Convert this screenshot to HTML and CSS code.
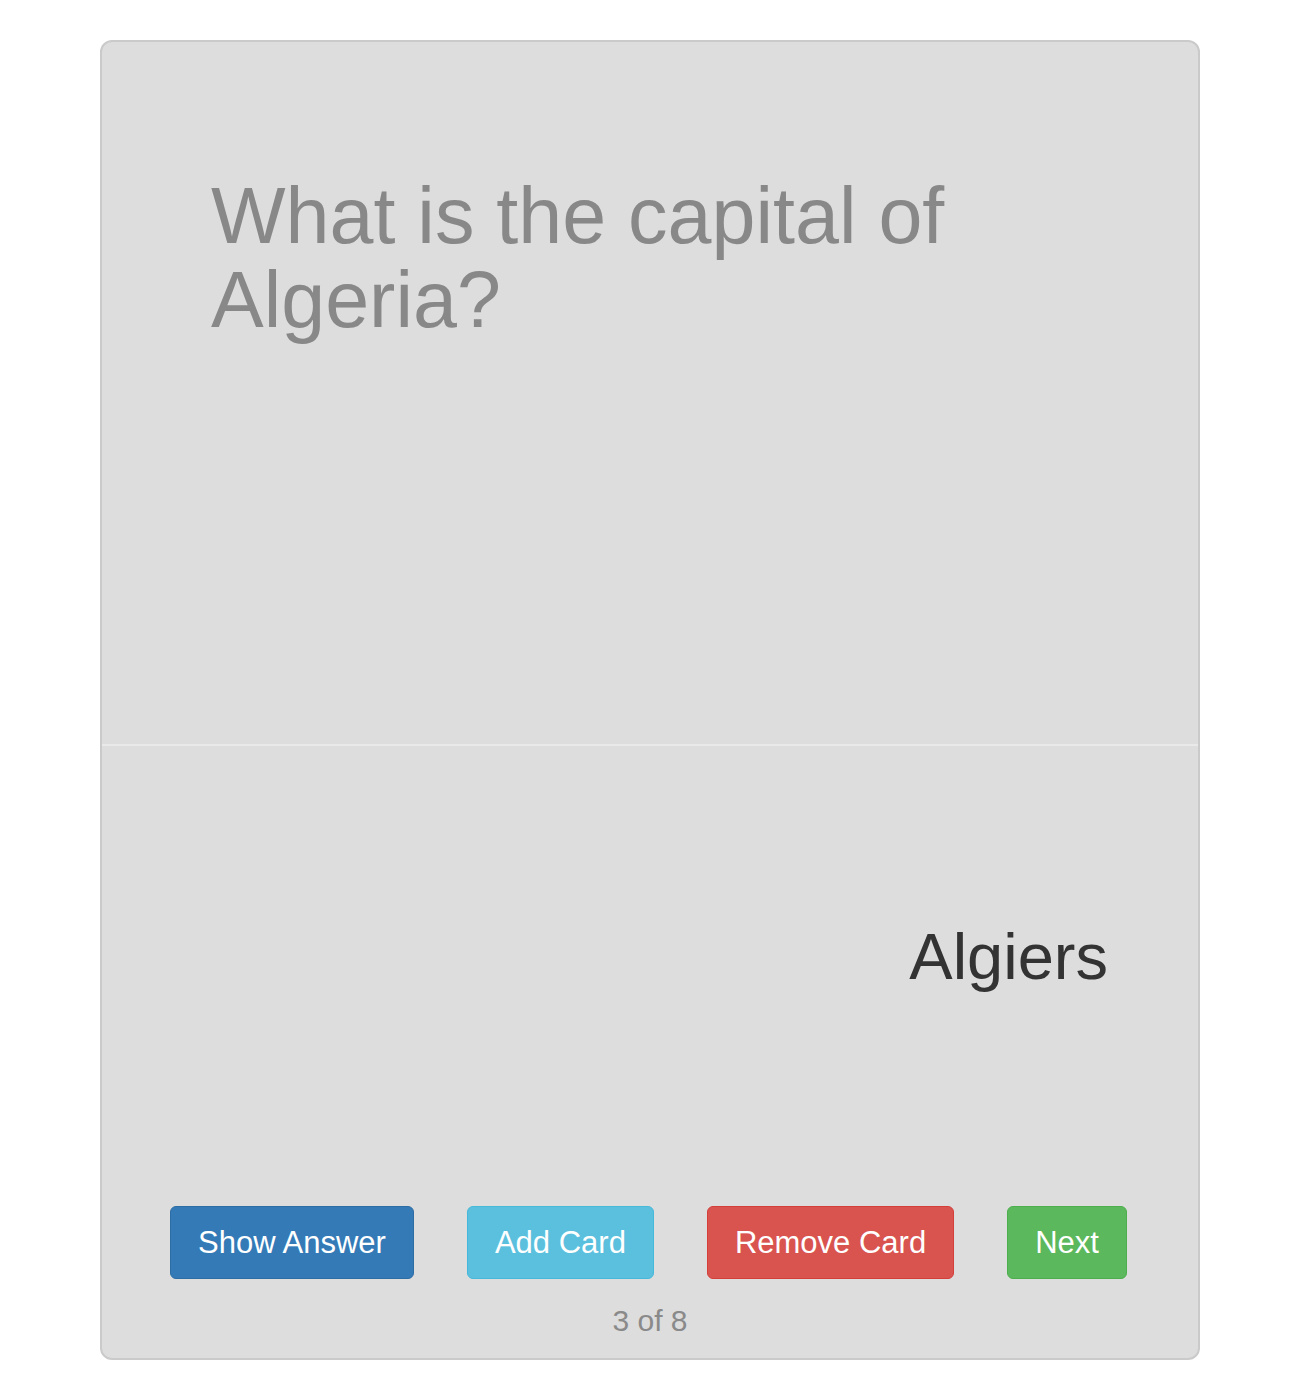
FILE: index.html
```html
<!DOCTYPE html>
<html lang="en">
<head>
<meta charset="utf-8">
<title>Flashcards</title>
<link rel="stylesheet" href="styles.css">
</head>
<body>
<div class="card">
  <div class="card-front">
    <p class="question">What is the capital of Algeria?</p>
  </div>
  <div class="card-back">
    <p class="answer">Algiers</p>
    <div class="actions">
      <button class="btn btn-primary">Show Answer</button>
      <button class="btn btn-info">Add Card</button>
      <button class="btn btn-danger">Remove Card</button>
      <button class="btn btn-success">Next</button>
    </div>
    <p class="counter">3 of 8</p>
  </div>
</div>
</body>
</html>
```

FILE: styles.css
```css
* { box-sizing: border-box; }
html, body { margin: 0; padding: 0; background: #ffffff; }
body { font-family: "Liberation Sans", Arial, sans-serif; }

.card {
  width: 1100px;
  margin: 40px 0 0 100px;
  background: #dddddd;
  border: 2px solid #cacaca;
  border-radius: 12px;
}

.card-front {
  height: 704px;
  padding: 132px 109px 0 109px;
  border-bottom: 2px solid #e9e9e9;
}

.question {
  margin: 0;
  font-size: 79px;
  line-height: 84px;
  color: #888888;
}

.card-back {
  padding: 0 0 17px 0;
}

.answer {
  margin: 0;
  padding: 172px 90px 0 0;
  text-align: right;
  font-size: 65px;
  line-height: 78px;
  color: #333333;
}

.actions {
  margin-top: 210px;
  display: flex;
  justify-content: center;
  gap: 53px;
  padding-right: 3px;
}

.btn {
  font-family: "Liberation Sans", Arial, sans-serif;
  font-size: 31px;
  line-height: 41px;
  padding: 15px 27px;
  border: 1px solid transparent;
  border-radius: 6px;
  color: #ffffff;
  cursor: pointer;
}

.btn-primary { background: #337ab7; border-color: #2e6da4; }
.btn-info { background: #5bc0de; border-color: #46b8da; }
.btn-danger { background: #d9534f; border-color: #d43f3a; }
.btn-success { background: #5cb85c; border-color: #4cae4c; }

.counter {
  margin: 22px 0 0 0;
  text-align: center;
  font-size: 30px;
  line-height: 40px;
  color: #8a8a8a;
}
```
